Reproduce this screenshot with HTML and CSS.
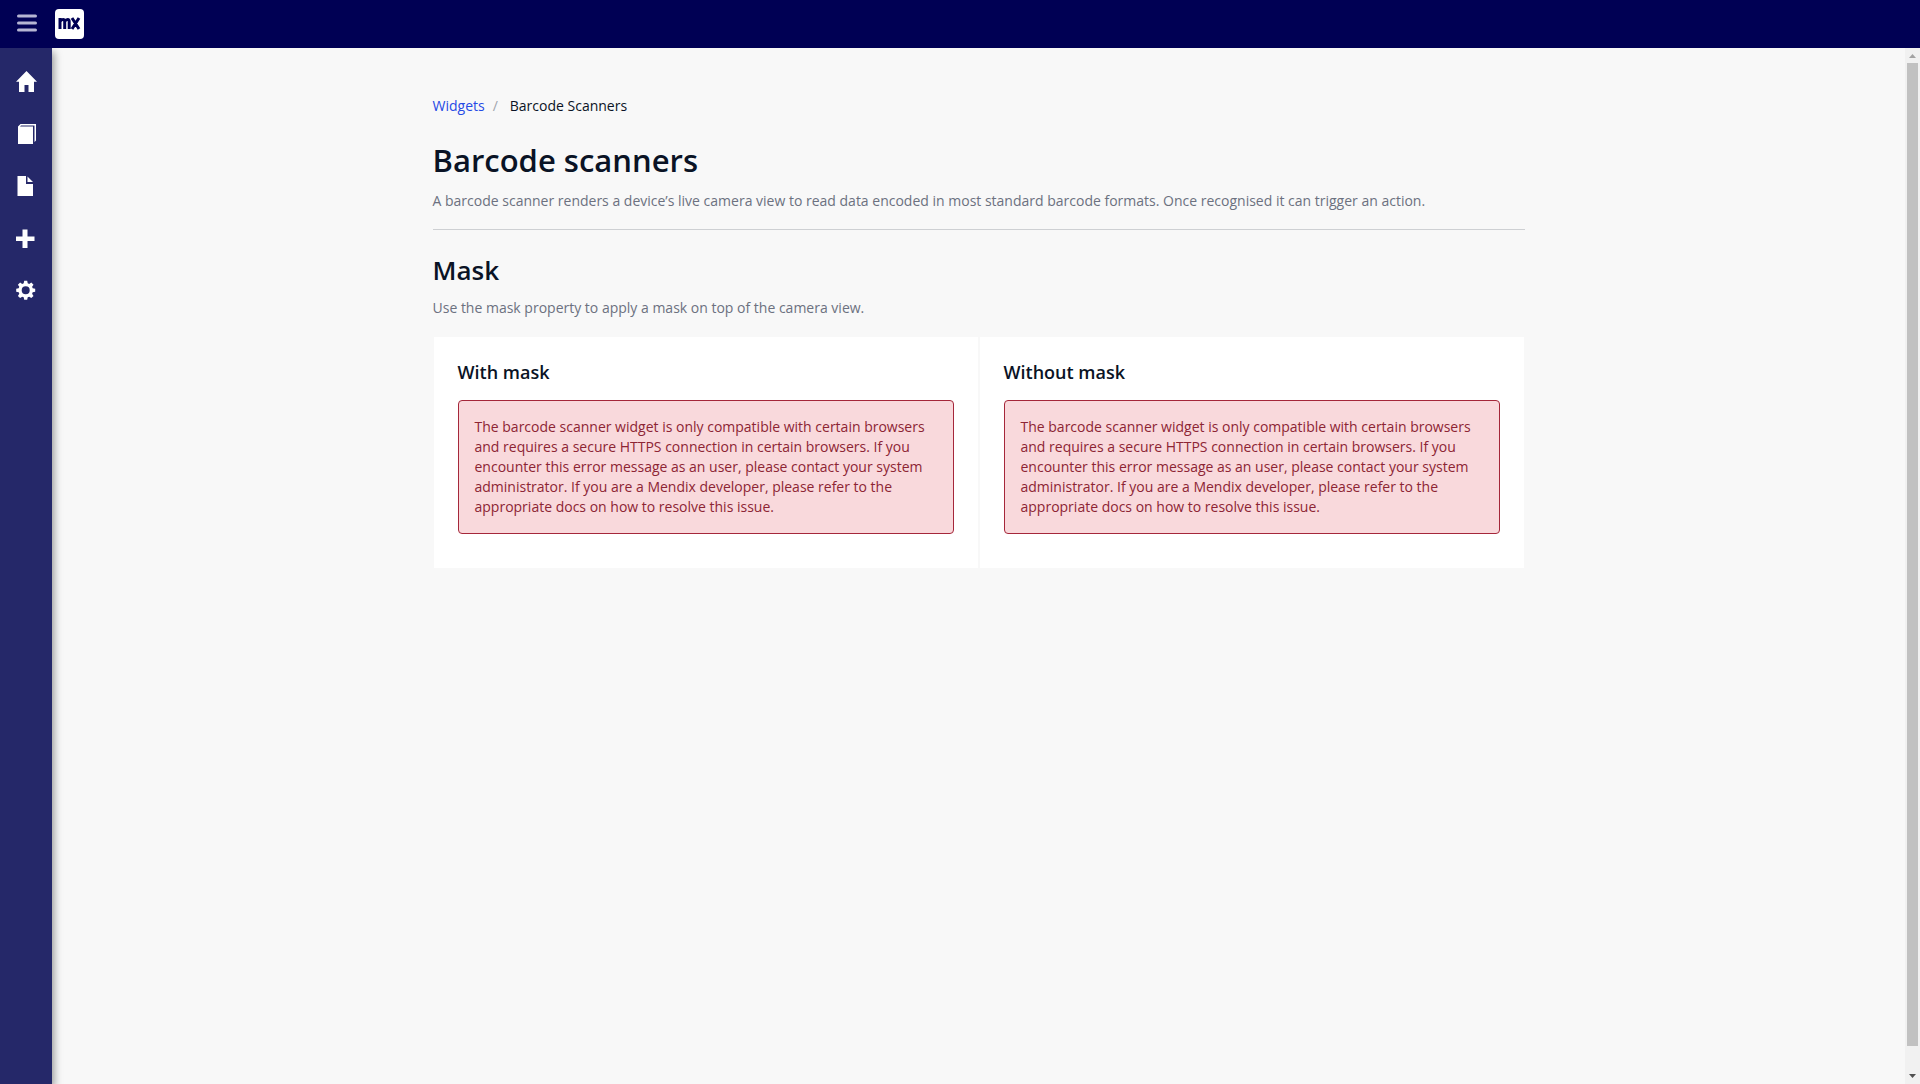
FILE: index.html
```html
<!DOCTYPE html>
<html lang="en">
<head>
<meta charset="utf-8">
<title>Barcode scanners</title>
<link rel="stylesheet" href="styles.css">
</head>
<body>
<header class="topbar">
  <button class="menu-toggle" type="button" aria-label="Toggle menu">
    <svg width="20" height="20" viewBox="0 0 20 20"><path d="M1.5 2h17M1.5 9h17M1.5 16h17" fill="none" stroke="#b5b5d3" stroke-width="3" stroke-linecap="round"/></svg>
  </button>
  <a class="logo" href="#" aria-label="Home page">
    <svg width="29" height="30" viewBox="0 0 29 30"><rect width="29" height="30" rx="4" fill="#fff"/><path d="M5 20V9M9.700 20V12.500Q9.700 10.500 8 10.500Q6.500 10.500 5 12.500M14.200 20V12.500Q14.200 10.500 12.700 10.500Q11 10.500 9.700 12.500M17 9L24 20M24 9L17 20" fill="none" stroke="#000054" stroke-width="3"/></svg>
  </a>
</header>
<div class="shell">
  <nav class="sidebar" aria-label="Main">
    <a class="nav-item" href="#" aria-label="Home"><svg width="22" height="22" viewBox="0 0 22 22"><path d="M10.500 0L21 10.800H18V21H12.500V14H8.500V21H3V10.800H0Z"/></svg></a>
    <a class="nav-item" href="#" aria-label="Layouts"><svg width="22" height="22" viewBox="0 0 22 22"><path d="M2 3.500L4.500 1H20V17.500L18.500 19V2.500H5L4 3.500H17V21H2Z"/></svg></a>
    <a class="nav-item" href="#" aria-label="Pages"><svg width="22" height="22" viewBox="0 0 22 22"><path d="M1.500 1H10V9H17V21H1.500ZM11.500 1.500L17 7H11.500Z"/></svg></a>
    <a class="nav-item" href="#" aria-label="Add"><svg width="22" height="22" viewBox="0 0 22 22"><path d="M6.500 2.500H11.500V9.500H18.500V14H11.500V21H6.500V14H0V9.500H6.500Z"/></svg></a>
    <a class="nav-item" href="#" aria-label="Settings"><svg width="22" height="22" viewBox="0 0 22 22"><path transform="translate(-.3 .8)" fill-rule="evenodd" d="M8.500 1H11.500L12 3.500L13.500 4.100L15.600 2.700L17.800 4.900L16.400 7L17 8.500L19.500 9V12L17 12.500L16.400 14L17.800 16.100L15.600 18.300L13.500 16.900L12 17.500L11.500 20H8.500L8 17.500L6.500 16.900L4.400 18.300L2.200 16.100L3.600 14L3 12.500L.5 12V9L3 8.500L3.600 7L2.200 4.900L4.400 2.700L6.500 4.100L8 3.500ZM10 6.500A4 4 0 1 0 10 14.500A4 4 0 1 0 10 6.500Z"/></svg></a>
  </nav>
  <main class="content">
    <div class="container">
      <nav class="breadcrumb" aria-label="Breadcrumb">
        <a href="#">Widgets</a><span class="separator">/</span><span>Barcode Scanners</span>
      </nav>
      <header class="page-header">
        <h1>Barcode scanners</h1>
        <p>A barcode scanner renders a device’s live camera view to read data encoded in most standard barcode formats. Once recognised it can trigger an action.</p>
      </header>
      <section class="section">
        <h2>Mask</h2>
        <p>Use the mask property to apply a mask on top of the camera view.</p>
        <div class="examples">
          <article class="example">
            <h3>With mask</h3>
            <div class="alert" role="alert">The barcode scanner widget is only compatible with certain browsers and requires a secure HTTPS connection in certain browsers. If you encounter this error message as an user, please contact your system administrator. If you are a Mendix developer, please refer to the appropriate docs on how to resolve this issue.</div>
          </article>
          <article class="example">
            <h3>Without mask</h3>
            <div class="alert" role="alert">The barcode scanner widget is only compatible with certain browsers and requires a secure HTTPS connection in certain browsers. If you encounter this error message as an user, please contact your system administrator. If you are a Mendix developer, please refer to the appropriate docs on how to resolve this issue.</div>
          </article>
        </div>
      </section>
    </div>
  </main>
  <div class="scrollbar" aria-hidden="true">
    <svg width="15" height="15" viewBox="0 0 15 15"><path d="M4 10L7.500 6L11 10Z" fill="#a3a3a3"/></svg>
    <div class="track"><div class="thumb"></div></div>
    <svg width="15" height="15" viewBox="0 0 15 15"><path d="M4 5L7.500 9L11 5Z" fill="#505050"/></svg>
  </div>
</div>
</body>
</html>
```

FILE: styles.css
```css
* {
  box-sizing: border-box;
}

body {
  display: flex;
  flex-direction: column;
  min-height: 100vh;
  margin: 0;
  background: #f8f8f8;
  color: #0a1325;
  font: 14px/20px "Open Sans", sans-serif;
}

h1,
h2,
h3,
p {
  margin: 0;
}

h1,
h2,
h3 {
  font-weight: 600;
}

h1 {
  font-size: 31px;
  line-height: 40px;
}

h2 {
  font-size: 26px;
  line-height: 32px;
}

h3 {
  font-size: 18px;
  line-height: 24px;
}

p {
  color: #6c7180;
}

.topbar {
  display: flex;
  align-items: center;
  gap: 18px;
  height: 48px;
  padding-left: 17px;
  background: #000054;
}

.menu-toggle {
  display: flex;
  padding: 0;
  border: 0;
  background: none;
  cursor: pointer;
}

.logo {
  display: flex;
}

.shell {
  display: flex;
  flex: 1;
}

.sidebar {
  display: flex;
  flex-direction: column;
  width: 52px;
  padding-top: 8px;
  background: #252869;
  box-shadow: 2px 4px 8px rgba(0, 0, 0, 0.4);
  clip-path: inset(0 -16px 0 0);
}

.nav-item {
  display: flex;
  align-items: center;
  height: 52px;
  padding-left: 16px;
}

.nav-item svg {
  fill: #fff;
}

.content {
  flex: 1;
  padding: 48px 24px;
}

.container {
  max-width: 1092px;
  margin: 0 auto;
}

.breadcrumb {
  display: flex;
}

.breadcrumb a {
  color: #264ae5;
  text-decoration: none;
}

.separator {
  padding: 0 12px 0 8px;
  color: #a0a4ad;
}

.page-header {
  margin: 24px 0;
  padding-bottom: 18px;
  border-bottom: 1px solid #ced0d3;
}

.page-header p {
  margin-top: 11px;
}

.section p {
  margin-top: 12px;
}

.examples {
  display: grid;
  grid-template-columns: 1fr 1fr;
  margin-top: 18px;
}

.example {
  padding: 23px 24px 34px;
  border: 1px solid #f8f8f8;
  background: #fff;
}

.alert {
  margin-top: 16px;
  padding: 16px;
  border: 1px solid #a5273a;
  border-radius: 4px;
  background: #f9d9dc;
  color: #8d2534;
}

.scrollbar {
  display: flex;
  flex-direction: column;
  width: 15px;
  background: #f1f1f1;
}

.track {
  flex: 1;
  display: grid;
  grid-template-rows: 42fr 1fr;
  padding: 0 2px;
}

.thumb {
  background: #c1c1c1;
}
```
